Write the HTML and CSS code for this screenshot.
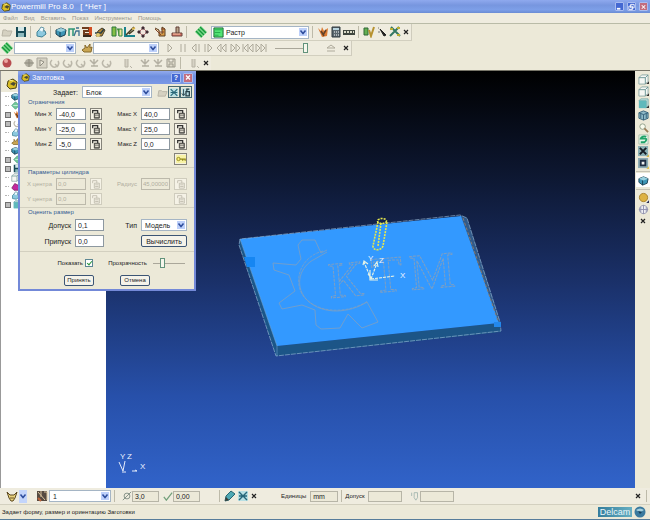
FILE: index.html
```html
<!DOCTYPE html>
<html lang="ru">
<head>
<meta charset="utf-8">
<title>Powermill Pro 8.0</title>
<link rel="stylesheet" href="styles.css">
</head>
<body>
<svg class="defs" aria-hidden="true">
  <symbol id="chev" viewBox="0 0 8 8"><path d="M1.5 2.5 4 5.5 6.500 2.500" fill="none" stroke="#2d4c9c" stroke-width="1.500"/></symbol>
  <symbol id="x" viewBox="0 0 8 8"><path d="M2 2l4 4M6 2L2 6" stroke="currentColor" stroke-width="1.200"/></symbol>
  <symbol id="app" viewBox="0 0 12 12"><path d="M2 3l5-2 4 3-1 6-6 1-3-3z" fill="#d9bd25" stroke="#4a4316"/><path d="M4 6l3-2 3 1-2 3z" fill="#4a4a35"/><path d="M3 2l4 1" stroke="#fff394"/></symbol>
  <symbol id="folder" viewBox="0 0 12 12"><path d="M2 4h3l1 1h5l-2 5H1z" fill="#d5d1c1" stroke="#b9b5a6"/></symbol>
  <symbol id="save" viewBox="0 0 12 12"><path d="M1 1h10v10H1z" fill="#174a55"/><path d="M3 1h6v4H3z" fill="#d4e8e8"/><path d="M3 7h6v4H3z" fill="#8db9bd"/></symbol>
  <symbol id="print" viewBox="0 0 12 12"><path d="M2 6l3-3 5 2 1 3-4 3-5-1z" fill="#8cc9df" stroke="#3c8195"/><path d="M4 4l2-3 3 1-1 4" fill="#eefaff" stroke="#6897a4"/></symbol>
  <symbol id="block" viewBox="0 0 12 12"><path d="M1 4l5-2 5 2-1 5-5 2-4-3z" fill="#3e96b6" stroke="#1d4252"/><path d="M1 4l5 2 5-2-5-2z" fill="#9ad1df"/><path d="M5 6v5" stroke="#153d50"/></symbol>
  <symbol id="heights" viewBox="0 0 12 12"><path d="M1 10V3h4v7M5 3h2" fill="none" stroke="#2c9476" stroke-width="1.500"/><path d="M6 10l2-5h3v5M8 2h3" fill="none" stroke="#3e708f" stroke-width="1.300"/></symbol>
  <symbol id="feeds" viewBox="0 0 12 12"><path d="M1 2h7v3H3v3h6" fill="none" stroke="#703d1e" stroke-width="2"/><path d="M8 1h3v9H8z" fill="#d14d21"/><path d="M2 10h8" stroke="#382a1e" stroke-width="2"/></symbol>
  <symbol id="leads" viewBox="0 0 12 12"><path d="M2 10l2-5 4-3 3 2-3 6z" fill="#b1893c" stroke="#443b27"/><path d="M1 7h6l3-4" fill="none" stroke="#273d43" stroke-width="1.500"/><circle cx="4" cy="9" r="2" fill="#dec873"/></symbol>
  <symbol id="tool" viewBox="0 0 12 12"><path d="M1 1h4v9H1zM6 3h2v7" fill="#84bd44" stroke="#2a793a"/><path d="M8 3h3v7H8z" fill="#f0e497" stroke="#348c43"/></symbol>
  <symbol id="axis" viewBox="0 0 12 12"><path d="M1 1v9h10" fill="none" stroke="#19828c" stroke-width="2"/><path d="M2 9l8-8M5 8l5-4" stroke="#443e25" stroke-width="1.500"/><path d="M8 3l3-1" stroke="#d9b54c" stroke-width="2"/></symbol>
  <symbol id="pattern" viewBox="0 0 12 12"><path d="M2 6l4-4 4 4-4 4z" fill="#f3e5dc" stroke="#a56468"/><path d="M5 1h2v2H5zM5 9h2v2H5zM1 5h2v2H1zM9 5h2v2H9z" fill="#402a32" stroke="#402a32"/></symbol>
  <symbol id="path" viewBox="0 0 12 12"><path d="M1 2l4 2v6h6V3L8 1v7" fill="#d79b46" stroke="#5b3e23"/><path d="M1 3l6 6M7 3h4M5 6h5" stroke="#814326"/></symbol>
  <symbol id="stock" viewBox="0 0 12 12"><path d="M1 7h10v3H1z" fill="#d57366" stroke="#6b423b"/><path d="M5 1h3v6H5z" fill="#b9a58b" stroke="#603c35"/><path d="M2 8h7" stroke="#f3c4a4"/></symbol>
  <symbol id="stripe" viewBox="0 0 12 12"><path d="M6 0l6 6-6 6-6-6z" fill="#7ad88a"/><path d="M1 5l6 6M3 3l6 6M5 1l6 6" stroke="#16983b" stroke-width="1.400"/></symbol>
  <symbol id="rast" viewBox="0 0 12 12"><path d="M1 1h10v10H1z" fill="#52e475" stroke="#13632b"/><path d="M2 3h8M2 6h6M2 9h4" stroke="#25a94b"/></symbol>
  <symbol id="flame" viewBox="0 0 12 12"><path d="M1 2l3 3 1-4 2 4 4-3-1 8-5 1z" fill="#db7930"/><path d="M4 5l3 5M9 4L6 9" stroke="#604127" stroke-width="1.500"/></symbol>
  <symbol id="calc" viewBox="0 0 12 12"><path d="M2 1h8v10H2z" fill="#5b676d" stroke="#303a40"/><path d="M3 2h6v2H3z" fill="#b9d4de"/><path d="M4 6h1m1 0h1m1 0h1M4 9h1m1 0h1m1 0h1" stroke="#fff"/></symbol>
  <symbol id="meter" viewBox="0 0 12 12"><path d="M0 4h12v5H0z" fill="#40463f"/><path d="M1 6h10" stroke="#dadac8" stroke-width="2" stroke-dasharray="2 1"/></symbol>
  <symbol id="check" viewBox="0 0 12 12"><path d="M1 2h4v7H1z" fill="#62af51" stroke="#2e6635"/><path d="M6 4l2 6 3-9" fill="none" stroke="#b79230" stroke-width="2"/></symbol>
  <symbol id="cursor" viewBox="0 0 12 12"><path d="M4 3l6 6-2 1z" fill="#222" stroke="#222"/><path d="M2 2h1M2 6h2" stroke="#777"/></symbol>
  <symbol id="cross" viewBox="0 0 12 12"><path d="M2 1l9 9M10 1L1 10" stroke="#347763" stroke-width="2"/><path d="M1 3h3M8 9h3M8 2h3" stroke="#baad31" stroke-width="2"/></symbol>
  <symbol id="gold" viewBox="0 0 12 12"><path d="M1 8l3-2V3l2 3 3-4v4l2-1-1 5H3z" fill="#c9a552" stroke="#866a2c"/></symbol>
  <symbol id="play" viewBox="0 0 12 12"><path d="M4 2l4 4-4 4z" class="vcr"/></symbol>
  <symbol id="pause" viewBox="0 0 12 12"><path d="M4 2v8M8 2v8" class="vcr"/></symbol>
  <symbol id="back" viewBox="0 0 12 12"><path d="M6 2L2 6l4 4zM9 2v8" class="vcr"/></symbol>
  <symbol id="step" viewBox="0 0 12 12"><path d="M5 2l4 4-4 4zM2 2v8" class="vcr"/></symbol>
  <symbol id="rew" viewBox="0 0 12 12"><path d="M5 2L1 6l4 4zM10 2L6 6l4 4z" class="vcr"/></symbol>
  <symbol id="fwd" viewBox="0 0 12 12"><path d="M2 2l4 4-4 4zM7 2l4 4-4 4z" class="vcr"/></symbol>
  <symbol id="first" viewBox="0 0 12 12"><path d="M1 2v8M6 2L2 6l4 4zM11 2L7 6l4 4z" class="vcr"/></symbol>
  <symbol id="last" viewBox="0 0 12 12"><path d="M1 2l4 4-4 4zM6 2l4 4-4 4zM11 2v8" class="vcr"/></symbol>
  <symbol id="eject" viewBox="0 0 12 12"><path d="M6 3l4 3H2zM2 9h8" class="vcr"/></symbol>
  <symbol id="ball" viewBox="0 0 12 12"><circle cx="6" cy="6" r="4.500" fill="#b84c50"/><circle cx="5" cy="4" r="2" fill="#eda7a2"/></symbol>
  <symbol id="g1" viewBox="0 0 12 12"><circle cx="6" cy="6" r="4" fill="#b1aea1"/><path d="M1 6h10M6 2v8" stroke="#8e8b7f"/></symbol>
  <symbol id="g2" viewBox="0 0 12 12"><path d="M1 1h10v10H1z" fill="#d6d2c4" stroke="#aaa79b"/><path d="M4 3v6l4-4z" fill="#eeeadb" stroke="#918e83"/></symbol>
  <symbol id="g3" viewBox="0 0 12 12"><path d="M3 3a4 4 0 1 0 6 1M6 7l3 3" fill="none" stroke="#bbb7aa" stroke-width="1.500"/></symbol>
  <symbol id="g4" viewBox="0 0 12 12"><path d="M2 3l4 4 4-4M3 9h7M6 2v7" fill="none" stroke="#b4b0a3" stroke-width="1.500"/></symbol>
  <symbol id="g5" viewBox="0 0 12 12"><path d="M2 2h8v8H2zM4 2v3h4V2M4 10V7h4v3" fill="#dedaca" stroke="#9e9b8e"/></symbol>
  <symbol id="g6" viewBox="0 0 12 12"><path d="M3 2v8h3V2M8 9l2 2" fill="#d6d2c5" stroke="#b7b3a5"/></symbol>
  <symbol id="lock" viewBox="0 0 12 12"><path d="M2 5V2h6v3" fill="none" stroke="#333" stroke-width="1.500"/><path d="M4 5h6v6H4z" fill="#77766f" stroke="#3d3c38"/><path d="M5 7h4M5 9h4" stroke="#f6f2e4"/></symbol>
  <symbol id="lockoff" viewBox="0 0 12 12"><path d="M2 5V2h5v3M4 5h6v6H4zM5 7h4M5 9h4" fill="none" stroke="#bdb9ab"/></symbol>
  <symbol id="key" viewBox="0 0 12 12"><path d="M0 1h12v10H0z" fill="#f8f3a6"/><circle cx="3" cy="6" r="2" fill="#fff27a" stroke="#847d17"/><path d="M5 6h6v2M8 6v2" fill="none" stroke="#918819" stroke-width="1.500"/></symbol>
  <symbol id="mesh" viewBox="0 0 12 12"><path d="M1 1h10v10H1z" fill="#b8e0e4"/><path d="M2 2l8 8M10 2l-8 8M2 6h8" stroke="#286779" stroke-width="1.400"/></symbol>
  <symbol id="down" viewBox="0 0 12 12"><path d="M1 1h10v10H1z" fill="#b9dce0"/><path d="M3 2v7M1 7l2 3 2-3" fill="none" stroke="#263f47"/><path d="M6 5h4v5H6zM7 5V2h3" fill="none" stroke="#263f47" stroke-width="1.500"/></symbol>
  <symbol id="cube" viewBox="0 0 12 12"><path d="M1 4l3-3h7v7l-3 3H1z" fill="#f5f7f3" stroke="#8aa7a5"/><path d="M1 4h7v7M8 4l3-3" fill="none" stroke="#679494"/><path d="M9 11l3-3v3z" fill="#333"/></symbol>
  <symbol id="cubet" viewBox="0 0 12 12"><path d="M1 3h8v8H1z" fill="#60b9bb"/><path d="M1 3l2-2h8v7L9 11V3z" fill="#c9e7e4" stroke="#75abab"/><path d="M1 3h8v8H1z" fill="#60b9bb"/><path d="M9 11l3-3v3z" fill="#333"/></symbol>
  <symbol id="iso" viewBox="0 0 12 12"><path d="M6 1l5 2v6l-5 2-5-2V3z" fill="#8db9c7" stroke="#315e76"/><path d="M1 3l5 2 5-2M6 5v6M3 4v5M9 4v5" fill="none" stroke="#315e76"/></symbol>
  <symbol id="zoom" viewBox="0 0 12 12"><circle cx="5" cy="5" r="3" fill="#f9fbed" stroke="#8c9d86"/><path d="M7 7l4 4" stroke="#9a7c56" stroke-width="2"/></symbol>
  <symbol id="refresh" viewBox="0 0 12 12"><path d="M1 1h10v10H1z" fill="#e5f7e9" stroke="#a8c0ad"/><path d="M9 3a4 3 0 0 0-6 2h5c2 0 1 3-1 4H3" fill="none" stroke="#20a369" stroke-width="2"/></symbol>
  <symbol id="fit" viewBox="0 0 12 12"><path d="M0 0h11v11H0z" fill="#8bb0b4"/><path d="M2 2l7 7M9 2L2 9" stroke="#151d24" stroke-width="2"/><path d="M9 12l3-3v3z" fill="#d9bd4f"/></symbol>
  <symbol id="box" viewBox="0 0 12 12"><path d="M0 0h11v11H0z" fill="#8dabb4"/><path d="M3 3h5v5H3z" fill="#eee" stroke="#1e2d42" stroke-width="2"/><path d="M9 12l3-3v3z" fill="#e4c450"/></symbol>
  <symbol id="sun" viewBox="0 0 12 12"><circle cx="6" cy="6" r="4.500" fill="#ddb343" stroke="#a7812a"/><path d="M9 12l3-3v3z" fill="#262b54"/></symbol>
  <symbol id="wire" viewBox="0 0 12 12"><circle cx="6" cy="6" r="4.500" fill="#eff0f4" stroke="#9698b0"/><path d="M1 6h10M6 1v10M3 3v6M9 3v6" fill="none" stroke="#8f91ad"/></symbol>
  <symbol id="cup" viewBox="0 0 12 12"><path d="M1 2l2 6 2 3h2l2-3 2-6-3 3H4z" fill="#e8d27c" stroke="#5c481f"/><path d="M4 8h4" stroke="#6a5225"/></symbol>
  <symbol id="cut" viewBox="0 0 12 12"><path d="M1 1h10v10H1z" fill="#554a40"/><path d="M2 2l7 8M5 1v6M8 2h3v8" fill="none" stroke="#d9c29c"/><path d="M2 8l3 3" stroke="#bd643b" stroke-width="2"/></symbol>
  <symbol id="dia" viewBox="0 0 12 12"><circle cx="6" cy="6" r="3.500" fill="none" stroke="#76847b"/><path d="M1 11L11 1" stroke="#76847b"/></symbol>
  <symbol id="tick" viewBox="0 0 12 12"><path d="M1 7l3 4 7-9" fill="none" stroke="#73a07b" stroke-width="1.500"/></symbol>
  <symbol id="pencil" viewBox="0 0 12 12"><path d="M1 11l1-5 5-5 4 3-6 6z" fill="#4fa9b4" stroke="#276571"/><path d="M1 11l1-4 3 3z" fill="#3d3c35"/></symbol>
  <symbol id="tip" viewBox="0 0 12 12"><path d="M2 2v4M5 2h4v6l-2 3-2-3z" fill="none" stroke="#9eb3ac"/></symbol>
  <symbol id="leaf" viewBox="0 0 12 12"><path d="M1 6l5-5 5 5-5 5z" fill="#73c89a" stroke="#4b9d7e"/><path d="M3 6h6" stroke="#d9fae7"/></symbol>
  <symbol id="gem" viewBox="0 0 12 12"><path d="M1 8l4-6 6 3-1 6H4z" fill="#c3279e" stroke="#79245f"/></symbol>
</svg>

<header class="titlebar">
  <svg class="ico"><use href="#app"/></svg>
  <h1>Powermill Pro 8.0&nbsp;&nbsp; [ *Нет ]</h1>
  <div class="winbtns">
    <button aria-label="Свернуть"><svg viewBox="0 0 8 8"><path d="M1 6h4" stroke="#fff" stroke-width="2"/></svg></button>
    <button aria-label="Восстановить"><svg viewBox="0 0 8 8"><path d="M3 1h4v4H3zM1 3h4v4H1z" fill="none" stroke="#fff"/></svg></button>
    <button class="close" aria-label="Закрыть"><svg><use href="#x"/></svg></button>
  </div>
</header>
<nav class="menu">
  <a href="#">Файл</a><a href="#">Вид</a><a href="#">Вставить</a><a href="#">Показ</a><a href="#">Инструменты</a><a href="#">Помощь</a>
</nav>

<section class="toolbars">
  <div class="bar bar1">
    <button aria-label="Открыть"><svg><use href="#folder"/></svg></button>
    <button aria-label="Сохранить"><svg><use href="#save"/></svg></button><i class="sep"></i>
    <button aria-label="Печать"><svg><use href="#print"/></svg></button><i class="sep"></i>
    <button aria-label="Заготовка"><svg><use href="#block"/></svg></button>
    <button aria-label="Высоты"><svg><use href="#heights"/></svg></button>
    <button aria-label="Подачи"><svg><use href="#feeds"/></svg></button>
    <button aria-label="Подводы"><svg><use href="#leads"/></svg></button><i class="sp"></i>
    <button aria-label="Инструмент"><svg><use href="#tool"/></svg></button>
    <button aria-label="Оси"><svg><use href="#axis"/></svg></button>
    <button aria-label="Точки"><svg><use href="#pattern"/></svg></button><i class="sp"></i>
    <button aria-label="Стратегии"><svg><use href="#path"/></svg></button><i class="sp"></i>
    <button aria-label="Обработка"><svg><use href="#stock"/></svg></button><i class="sep"></i><i class="sp"></i>
    <button aria-label="Траектория"><svg><use href="#stripe"/></svg></button><i class="sp"></i>
    <span class="combo strategy"><svg class="lead"><use href="#rast"/></svg><select aria-label="Стратегия"><option>Растр</option></select><svg class="arrow"><use href="#chev"/></svg></span><i class="sep"></i>
    <button aria-label="Проверка"><svg><use href="#flame"/></svg></button>
    <button aria-label="Калькулятор"><svg><use href="#calc"/></svg></button>
    <button aria-label="Измерение"><svg><use href="#meter"/></svg></button><i class="sep"></i>
    <button aria-label="Контроль"><svg><use href="#check"/></svg></button>
    <button aria-label="Выбор"><svg><use href="#cursor"/></svg></button>
    <button aria-label="Преобразовать"><svg><use href="#cross"/></svg></button>
    <button class="x" aria-label="Закрыть панель"><svg><use href="#x"/></svg></button>
  </div>
  <div class="bar bar2">
    <button aria-label="Траектория"><svg><use href="#stripe"/></svg></button>
    <span class="combo c62"><select aria-label="Траектории"><option></option></select><svg class="arrow"><use href="#chev"/></svg></span><i class="sp"></i>
    <button aria-label="Инструмент"><svg><use href="#gold"/></svg></button>
    <span class="combo c64"><select aria-label="Инструменты"><option></option></select><svg class="arrow"><use href="#chev"/></svg></span><i class="sp"></i>
    <button aria-label="Пуск"><svg><use href="#play"/></svg></button>
    <button aria-label="Пауза"><svg><use href="#pause"/></svg></button>
    <button aria-label="Шаг назад"><svg><use href="#back"/></svg></button>
    <button aria-label="Шаг вперед"><svg><use href="#step"/></svg></button>
    <button aria-label="Назад"><svg><use href="#rew"/></svg></button>
    <button aria-label="Вперед"><svg><use href="#fwd"/></svg></button>
    <button aria-label="В начало"><svg><use href="#first"/></svg></button>
    <button aria-label="В конец"><svg><use href="#last"/></svg></button><i class="sp"></i><i class="sp"></i>
    <input type="range" class="speed" value="100" aria-label="Скорость"><i class="sp wide"></i>
    <button aria-label="Извлечь"><svg><use href="#eject"/></svg></button><i class="sp"></i>
    <button class="x" aria-label="Закрыть панель"><svg><use href="#x"/></svg></button>
  </div>
  <div class="bar bar3">
    <button aria-label="Запись"><svg><use href="#ball"/></svg></button><i class="sp"></i><i class="sp"></i>
    <button aria-label="Обзор"><svg><use href="#g1"/></svg></button>
    <button aria-label="Режим"><svg><use href="#g2"/></svg></button>
    <button aria-label="Поворот"><svg><use href="#g3"/></svg></button>
    <button aria-label="Дуга"><svg><use href="#g3"/></svg></button>
    <button aria-label="Контур"><svg><use href="#g3"/></svg></button>
    <button aria-label="Проекция"><svg><use href="#g4"/></svg></button>
    <button aria-label="Кривая"><svg><use href="#g3"/></svg></button><i class="sp"></i><i class="sp"></i>
    <button aria-label="Слой"><svg><use href="#g6"/></svg></button><i class="sp"></i>
    <button aria-label="Вниз"><svg><use href="#g4"/></svg></button>
    <button aria-label="Вверх"><svg><use href="#g4"/></svg></button>
    <button aria-label="Записать"><svg><use href="#g5"/></svg></button><i class="sep"></i><i class="sp"></i>
    <button aria-label="Удалить"><svg><use href="#g6"/></svg></button>
    <button class="x" aria-label="Закрыть панель"><svg><use href="#x"/></svg></button>
  </div>
</section>

<main class="work">
  <aside class="explorer">
    <div class="tab"><svg><use href="#app"/></svg></div>
    <ul>
      <li><svg><use href="#block"/></svg></li>
      <li><svg><use href="#leaf"/></svg></li>
      <li class="plus"><svg><use href="#flame"/></svg></li>
      <li class="plus"><svg><use href="#g3"/></svg></li>
      <li><svg><use href="#print"/></svg></li>
      <li><svg><use href="#gold"/></svg></li>
      <li><svg><use href="#block"/></svg></li>
      <li class="plus"><svg><use href="#leaf"/></svg></li>
      <li class="plus"><svg><use href="#save"/></svg></li>
      <li><svg><use href="#cube"/></svg></li>
      <li><svg><use href="#gem"/></svg></li>
      <li><svg><use href="#print"/></svg></li>
      <li class="plus"><svg><use href="#cubet"/></svg></li>
    </ul>
  </aside>

  <div class="viewport">
    <svg viewBox="106 71 529 417" preserveAspectRatio="xMidYMid meet" role="img" aria-label="Модель">
      <path d="M240 239L277 346L276 356L239 245Z" fill="#1b5688"/>
      <path d="M277 346L499 323L501 332L276 356Z" fill="#1c5587"/>
      <path d="M460 215L467 218L501 324L498 325Z" fill="#315a89"/>
      <path d="M240 239L461 216L499 323L277 346Z" fill="#3399ff"/>
      <path d="M240 239L239 245L276 356L501 331L500 322L467 218L460 215L240 239" fill="none" stroke="#9dc0dc" stroke-width=".6" stroke-dasharray="5 1"/>
      <path d="M277 346v10M240 239L277 346" fill="none" stroke="#71a6d0" stroke-width=".6"/>
      <path d="M463 218L499 324" stroke="#85786f" stroke-width="1" stroke-dasharray="3 2"/>
      <path d="M494 322h7v5h-7z" fill="#2388ec"/>
      <path d="M244 257h11v10h-8z" fill="#1686f2"/>
      <g fill="none" stroke="#7f9fc2" stroke-width=".8">
        <path d="M327 252L315 259C300 266 294 285 306 299C322 316 350 313 367 302L378 322L362 328L348 314L340 328L321 329L316 325L315 310L302 305L282 309L279 303L295 291L289 275L274 270L273 263L296 265L301 259L298 245L302 240L315 240L321 253L327 250"/>
        <path d="M323 251C300 257 294 280 302 294C313 312 344 316 368 301" stroke-dasharray="3 1"/>
      </g>
      <g class="ktm">
        <text x="330" y="298" transform="rotate(-5 330 298)">К</text>
        <text x="373" y="293" transform="rotate(-5 373 293)">Т</text>
        <text x="411" y="290" transform="rotate(-5 411 290)">М</text>
      </g>
      <g fill="none" stroke="#e7e94d" stroke-width="1.600" stroke-dasharray="2 1">
        <path d="M378 222L373 246C373 251 381 251 383 246L387 222"/>
        <ellipse cx="382" cy="221" rx="4.500" ry="2.500"/><path d="M381 223L378 246"/>
      </g>
      <g fill="none" stroke="#e4f2e6" stroke-width="1.200"><path d="M371 279L364 262M371 279L377 263M371 279L395 276" stroke-dasharray="3 1"/><path d="M363 265l1-4 4 3M374 266l3-4 1 5M370 270v10h8M368 274l4 5"/></g>
      <g class="axes"><text x="368" y="261">Y</text><text x="379" y="263">Z</text><text x="400" y="278">X</text>
        <text x="120" y="459">Y</text><text x="127" y="459">Z</text><text x="140" y="469">X</text></g>
      <g fill="none" stroke="#e5ecfa"><path d="M123 471L119 462M123 471L125 461M122 472h4M132 471h5l-2-1"/></g>
    </svg>
  </div>

  <div class="viewtools">
    <button aria-label="Вид сверху"><svg><use href="#cube"/></svg></button>
    <button aria-label="Вид спереди"><svg><use href="#cube"/></svg></button>
    <button aria-label="Вид слева"><svg><use href="#cubet"/></svg></button>
    <button aria-label="Изометрия"><svg><use href="#iso"/></svg></button>
    <button aria-label="Масштаб"><svg><use href="#zoom"/></svg></button>
    <button aria-label="Обновить"><svg><use href="#refresh"/></svg></button>
    <button aria-label="Вписать"><svg><use href="#fit"/></svg></button>
    <button aria-label="Рамка"><svg><use href="#box"/></svg></button>
    <hr>
    <button class="on" aria-label="Блок"><svg><use href="#block"/></svg></button>
    <hr>
    <button aria-label="Тонировка"><svg><use href="#sun"/></svg></button>
    <button aria-label="Каркас"><svg><use href="#wire"/></svg></button>
    <button aria-label="Закрыть панель"><svg class="small"><use href="#x"/></svg></button>
  </div>

  <form class="dialog" aria-label="Заготовка">
    <header>
      <svg class="ico"><use href="#app"/></svg><h2>Заготовка</h2>
      <button type="button">?</button><button type="button" class="close" aria-label="Закрыть"><svg><use href="#x"/></svg></button>
    </header>
    <div class="define">
      <label for="def">Задает:</label>
      <span class="combo"><select id="def"><option>Блок</option></select><svg class="arrow"><use href="#chev"/></svg></span>
      <div class="trio">
        <button type="button" aria-label="Открыть"><svg><use href="#folder"/></svg></button>
        <button type="button" aria-label="Сетка"><svg><use href="#mesh"/></svg></button>
        <button type="button" aria-label="Загрузить"><svg><use href="#down"/></svg></button>
      </div>
    </div>
    <fieldset>
      <legend>Ограничения</legend>
      <div class="limits">
        <label for="a1">Мин X</label><input id="a1" value="-40,0"><button type="button" aria-label="Блокировать"><svg><use href="#lock"/></svg></button>
        <label for="a2">Макс X</label><input id="a2" value="40,0"><button type="button" aria-label="Блокировать"><svg><use href="#lock"/></svg></button>
        <label for="a3">Мин Y</label><input id="a3" value="-25,0"><button type="button" aria-label="Блокировать"><svg><use href="#lock"/></svg></button>
        <label for="a4">Макс Y</label><input id="a4" value="25,0"><button type="button" aria-label="Блокировать"><svg><use href="#lock"/></svg></button>
        <label for="a5">Мин Z</label><input id="a5" value="-5,0"><button type="button" aria-label="Блокировать"><svg><use href="#lock"/></svg></button>
        <label for="a6">Макс Z</label><input id="a6" value="0,0"><button type="button" aria-label="Блокировать"><svg><use href="#lock"/></svg></button>
        <button type="button" class="last" aria-label="Снять все"><svg><use href="#key"/></svg></button>
      </div>
    </fieldset>
    <fieldset disabled>
      <legend>Параметры цилиндра</legend>
      <div class="limits">
        <label for="b1">X центра</label><input id="b1" value="0,0"><button type="button" aria-label="Блокировать"><svg><use href="#lockoff"/></svg></button>
        <label for="b2">Радиус</label><input id="b2" value="45,00000"><button type="button" aria-label="Блокировать"><svg><use href="#lockoff"/></svg></button>
        <label for="b3">Y центра</label><input id="b3" value="0,0"><button type="button" aria-label="Блокировать"><svg><use href="#lockoff"/></svg></button>
        <button type="button" class="last" aria-label="Снять все"><svg><use href="#lockoff"/></svg></button>
      </div>
    </fieldset>
    <fieldset>
      <legend>Оценить размер</legend>
      <div class="estimate">
        <label for="c1">Допуск</label><input id="c1" value="0,1">
        <label for="c2">Тип</label><span class="combo"><select id="c2"><option>Модель</option></select><svg class="arrow"><use href="#chev"/></svg></span>
        <label for="c3">Припуск</label><input id="c3" value="0,0">
        <button type="button" class="push">Вычислить</button>
      </div>
    </fieldset>
    <div class="show">
      <label for="d1">Показать</label><input type="checkbox" id="d1" checked>
      <label for="d2">Прозрачность</label><input type="range" id="d2" value="25">
    </div>
    <div class="actions"><button type="button" class="push">Принять</button><button type="button" class="push">Отмена</button></div>
  </form>
</main>

<section class="bottom">
  <i class="sp"></i>
  <button class="big" aria-label="Создать инструмент"><svg><use href="#cup"/></svg></button>
  <button class="drop" aria-label="Список"><svg><use href="#chev"/></svg></button><i class="sp"></i>
  <button class="big" aria-label="Активный инструмент"><svg><use href="#cut"/></svg></button>
  <span class="combo c62"><select aria-label="Номер инструмента"><option>1</option></select><svg class="arrow"><use href="#chev"/></svg></span>
  <i class="sep"></i><i class="sp"></i>
  <svg class="ico"><use href="#dia"/></svg><input class="w27" value="3,0" aria-label="Диаметр"><i class="sp"></i>
  <svg class="ico"><use href="#tick"/></svg><input class="w27" value="0,00" aria-label="Радиус при вершине">
  <i class="sp wide"></i><i class="sep"></i>
  <button aria-label="Правка"><svg><use href="#pencil"/></svg></button>
  <button aria-label="Сетка"><svg><use href="#mesh"/></svg></button>
  <button class="x" aria-label="Закрыть панель"><svg><use href="#x"/></svg></button>
  <label class="units" for="u">Единицы</label><input id="u" class="w28" value="mm"><i class="sep"></i>
  <label class="tol" for="t">Допуск</label><input id="t" class="w34" value=""><i class="sp"></i><i class="sp"></i>
  <svg class="ico"><use href="#tip"/></svg><input class="w34" value="" aria-label="Припуск">
  <button class="x end" aria-label="Закрыть панель"><svg><use href="#x"/></svg></button><i class="sep"></i>
</section>
<footer class="status">
  <span>Задает форму, размер и ориентацию Заготовки</span>
  <b>Delcam</b>
  <svg viewBox="0 0 12 12"><circle cx="6" cy="6" r="5.500" fill="#39799e"/><path d="M2 4q4-3 8 0-4 3-8 0" fill="#a4d0dd"/><path d="M4 5l4 1-2 2z" fill="#173c56"/></svg>
</footer>
</body>
</html>
```
FILE: styles.css
```css
* { box-sizing: border-box; }

body {
  margin: 0;
  min-height: 100vh;
  display: flex;
  flex-direction: column;
  background: #ece9d8;
  color: #222;
  font: 7px/9px "Liberation Sans", Arial, sans-serif;
}

.defs { position: absolute; width: 0; height: 0; }
.vcr { fill: none; stroke: #aeaa9b; }

button, input, select {
  font: inherit;
  color: inherit;
  margin: 0;
  padding: 0;
  border: 0;
  border-radius: 0;
  background: none;
  min-width: 0;
}
button { display: flex; align-items: center; justify-content: center; }
h1, h2 { margin: 0; font-weight: 400; }
.ico { width: 10px; height: 10px; flex: none; }

/* Title bar and menu */
.titlebar {
  display: flex;
  align-items: center;
  height: 13px;
  padding: 0 2px 0 1px;
  background: linear-gradient(#8fa9ee, #7796df 40%, #7d9fe8 75%, #6b8cd4);
  color: #fff;
}
.titlebar h1 { flex: 1; font: 8px/12px "Liberation Sans", Arial, sans-serif; }
.winbtns { display: flex; gap: 3px; }
.winbtns button, .dialog > header button {
  width: 9px;
  height: 9px;
  background: #4468d2;
  border: 1px solid #a9bcf0;
  border-radius: 1px;
  color: #fff;
}
.winbtns svg { width: 8px; height: 8px; }
.winbtns .close, .dialog > header .close { background: #c26d7e; }
.menu {
  display: flex;
  gap: 6px;
  height: 11px;
  padding: 0 3px;
  border-bottom: 1px solid #b9bba7;
  background: #efecdf;
  font-size: 6px;
}
.menu a { color: #99968b; text-decoration: none; line-height: 10px; }

/* Toolbars */
.toolbars { height: 47px; border-bottom: 1px solid #777568; }
.bar {
  display: flex;
  align-items: center;
  width: max-content;
  border-right: 1px solid #cfccbd;
  border-bottom: 1px solid #d2cfbf;
  background: #efecdf;
}
.bar1 { height: 17px; }
.bar2 { height: 15px; }
.bar3 { height: 14px; border: 0; }
.bar button, .bottom button { width: 13px; height: 13px; flex: none; }
.bar button:first-child { width: 14px; }
.bar button svg, .bottom button svg { width: 12px; height: 12px; }
.bar .x, .bottom .x { width: 10px; }
.bar .x svg, .bottom .x svg { width: 8px; height: 8px; }
.sep { width: 1px; height: 12px; margin: 0 3px; background: #bdbaa9; flex: none; }
.sp { width: 4px; flex: none; }
.sp.wide { width: 16px; }

.combo {
  display: flex;
  align-items: center;
  height: 12px;
  padding: 1px;
  border: 1px solid #a5b5c5;
  background: #fff;
}
.combo select { flex: 1; appearance: none; outline: 0; padding-left: 2px; }
.combo .arrow { width: 8px; height: 8px; background: #bdd0fa; flex: none; }
.combo .lead { width: 11px; height: 11px; flex: none; }
.strategy { width: 98px; height: 13px; }
.c62 { width: 62px; }
.c64 { width: 66px; }

input[type="range"] { appearance: none; height: 11px; background: linear-gradient(#aaa79a, #aaa79a) center / 100% 1px no-repeat; }
input[type="range"]::-webkit-slider-thumb {
  appearance: none;
  width: 5px;
  height: 10px;
  border: 1px solid #62937c;
  background: #f6f6ec;
}
.speed { width: 33px; }

/* Work area */
.work { position: relative; display: flex; flex: 1; }
.explorer { width: 106px; border-left: 1px solid #999; background: #fff; }
.tab { height: 21px; padding: 7px 0 0 5px; background: linear-gradient(90deg, #ece9d8 18px, #fff 18px); }
.tab svg { width: 12px; height: 12px; }
.explorer ul { list-style: none; margin: 0; padding: 0 0 0 4px; }
.explorer li { display: flex; align-items: center; gap: 2px; height: 9px; }
.explorer li::before { content: ""; width: 4px; border-top: 1px dotted #b5b5b5; }
.explorer li.plus::before { height: 4px; border: 1px solid #707070; background: #bbb; }
.explorer li svg { width: 9px; height: 9px; }

.viewport {
  flex: 1;
  display: flex;
  background: linear-gradient(#000, #0d1731 25%, #1a3068 50%, #2750aa 78%, #3163c9);
}
.viewport svg { width: 100%; height: 417px; }
.ktm text { font: 51px "Liberation Serif", serif; fill: none; stroke: #7f9fc2; stroke-width: 1px; stroke-dasharray: 3 1; }
.axes text { font: 8px "Liberation Sans", sans-serif; fill: #eef3ff; }

.viewtools { width: 15px; padding: 2px 0 0 1px; }
.viewtools button { width: 14px; height: 12px; margin-bottom: 0; }
.viewtools svg { width: 11px; height: 11px; }
.viewtools .small { width: 8px; height: 8px; }
.viewtools .on { background: #fff; height: 14px; }
.viewtools hr { margin: 2px 0 1px; border: 0; border-top: 1px solid #c5c2b3; }

/* Stock dialog floats over the explorer and the viewport */
.dialog {
  position: absolute;
  left: 18px;
  top: 0;
  width: 178px;
  border: 2px solid #7389d8;
  border-top: 0;
  background: #ece9d8;
  padding-bottom: 3px;
}
.dialog > header {
  display: flex;
  align-items: center;
  gap: 2px;
  height: 13px;
  margin: 0 -2px;
  padding: 0 3px;
  background: linear-gradient(#93abed, #6f8fdf 40%, #7a98e6);
  color: #fff;
}
.dialog h2 { flex: 1; font: 7px/12px "Liberation Sans", sans-serif; }
.dialog > header button { width: 10px; height: 10px; font-weight: 700; }
.dialog > header svg { width: 9px; height: 9px; }
.dialog label { text-align: right; white-space: nowrap; }
.define {
  display: grid;
  grid-template-columns: 58px 70px 1fr;
  gap: 4px;
  align-items: center;
  padding: 2px 3px 0 0;
}
.trio { display: flex; justify-content: flex-end; }
.trio button { width: 12px; height: 12px; }
.trio button + button { border: 1px solid #466a72; }
.trio svg { width: 11px; height: 11px; }
.dialog fieldset { margin: 0; padding: 0 7px 2px 0; border: 0; border-bottom: 1px solid #d3d0c0; min-width: 0; }
.dialog legend { height: 10px; padding: 0 0 0 8px; color: #315a91; font-size: 6px; }
.limits, .estimate { display: grid; gap: 3px 4px; align-items: center; }
.limits { grid-template-columns: 32px 30px 12px 1fr 29px 13px; }
.limits label { font-size: 6px; }
.limits input, .estimate input {
  width: 100%;
  height: 12px;
  padding: 0 2px;
  border: 1px solid #8d98a0;
  background: #fff;
}
.limits button { height: 12px; border: 1px solid #85837a; background: #f5f2e6; }
.limits button svg { width: 10px; height: 10px; }
.limits .last { grid-column: 6; }
.dialog fieldset:disabled { color: #b1ae9f; }
.dialog fieldset:disabled input { background: #ece9d8; border-color: #bcb9ab; font-size: 6px; padding: 0 1px; }
.dialog fieldset:disabled button { border-color: #cfccbd; }
.estimate { grid-template-columns: 51px 29px 1fr 46px; gap: 4px; padding: 1px 0 2px; }
.push { height: 12px; border: 1px solid #3c5575; border-radius: 2px; background: #f5f3ea; }
.estimate .push { grid-column: 4; }
.show {
  display: grid;
  grid-template-columns: 63px 8px 52px 32px;
  column-gap: 2px;
  align-items: center;
  height: 22px;
  font-size: 6px;
}
.show input[type="range"] { width: 32px; margin-left: 4px; }
.show input[type="checkbox"] { appearance: none; width: 8px; height: 8px; border: 1px solid #5d8793; background: #fff; }
.show input[type="checkbox"]:checked::after {
  content: "";
  display: block;
  width: 2px;
  height: 4px;
  margin: 0 auto;
  border: solid #29973b;
  border-width: 0 1px 1px 0;
  box-sizing: content-box;
  transform: rotate(40deg);
}
.actions { display: flex; gap: 26px; padding: 1px 0 0 44px; }
.actions .push { width: 30px; height: 11px; font-size: 6px; }

/* Tool bar under the view, and the status line */
.bottom {
  display: flex;
  align-items: center;
  height: 17px;
  border-bottom: 1px solid #d3d0bf;
  background: #efecdf;
}
.bottom .big { width: 15px; }
.bottom .drop { width: 8px; height: 13px; background: #c3d5fb; margin-right: 3px; }
.bottom .drop svg { width: 8px; height: 8px; }
.bottom input { height: 11px; padding: 0 2px; border: 1px solid #b7b5a7; background: #ece9d8; }
.bottom label { font-size: 6px; }
.w27 { width: 27px; }
.w28 { width: 28px; }
.w34 { width: 34px; }
.units { margin: 0 4px 0 22px; }
.tol { margin-right: 3px; }
.bottom .end { margin-left: auto; }
.status { display: flex; align-items: center; gap: 2px; height: 15px; padding: 0 4px 0 2px; border-bottom: 1px solid #577d9b; }
.status span { flex: 1; font-size: 6px; }
.status b { width: 34px; font: 9px/10px "Liberation Sans", sans-serif; text-align: center; color: #eaf6fa; background: linear-gradient(90deg, #347d9c, #66afc2); }
.status svg { width: 12px; height: 12px; }
```
